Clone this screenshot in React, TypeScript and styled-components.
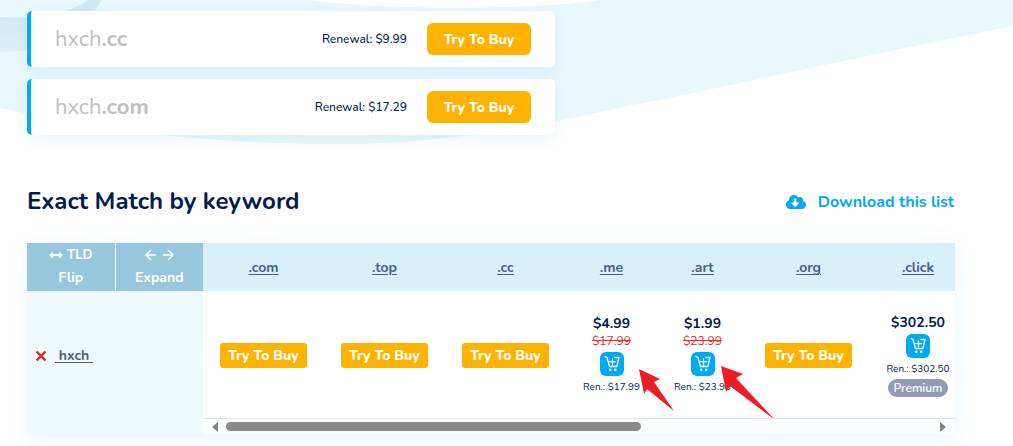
import React from "react";
import styled, { createGlobalStyle } from "styled-components";

const GlobalStyle = createGlobalStyle`
  *, *::before, *::after { box-sizing: border-box; }
  body { margin: 0; background: #fff; color: #001b4f; font-family: Nunito, Lato, sans-serif; overflow-x: hidden; }
  button { font-family: inherit; border: 0; cursor: pointer; }
`;

const Page = styled.div`
  position: relative;
  padding: 11px 58px 12px 27px;
`;

const Backdrop = styled.svg`
  position: absolute;
  top: 0;
  left: 0;
  width: 100%;
  height: 146px;
  z-index: -1;
`;

const Results = styled.ul`
  display: flex;
  flex-direction: column;
  gap: 12px;
  max-width: 528px;
  margin: 0;
  padding: 0;
  list-style: none;
`;

const ResultCard = styled.li`
  display: flex;
  align-items: center;
  height: 56px;
  padding: 0 24px;
  border-left: 4px solid #00aaf7;
  border-radius: 5px;
  background: #fff;
  box-shadow: 0 4px 14px rgba(0, 150, 220, 0.1);
`;

const DomainName = styled.div`
  flex: 1;
  font-size: 22px;
  line-height: 28px;
  color: #bfbfbf;
`;

const Renewal = styled.span`
  margin-right: 20px;
  font-size: 12px;
  font-weight: 500;
`;

const BuyButton = styled.button<{ $large?: boolean }>`
  display: block;
  width: ${(p) => (p.$large ? 104 : 87)}px;
  height: ${(p) => (p.$large ? 32 : 25)}px;
  margin: 0 auto;
  padding: 0;
  border-radius: ${(p) => (p.$large ? 6 : 3)}px;
  background: #ffb300;
  color: #fff;
  font-size: 14px;
  font-weight: 800;
  white-space: nowrap;
`;

const SectionHead = styled.header`
  display: flex;
  align-items: center;
  justify-content: space-between;
  margin: 48px 0 24px;
`;

const Title = styled.h2`
  margin: 0;
  font-size: 24px;
  line-height: 36px;
  font-weight: 700;
`;

const DownloadLink = styled.a`
  display: flex;
  align-items: center;
  gap: 12px;
  padding: 1px 1px 0 0;
  color: #00a9f4;
  font-size: 16px;
  font-weight: 700;
  text-decoration: none;
`;

const Matrix = styled.section`
  display: flex;
  box-shadow: 0 4px 20px rgba(0, 150, 220, 0.1);
`;

const Frozen = styled.div`
  display: flex;
  flex-direction: column;
  flex: 0 0 176px;
  background: #eff9fe;
`;

const FrozenHead = styled.div`
  display: grid;
  grid-template-columns: 1fr 1fr;
  gap: 1px;
  height: 48px;
  background: #fff;
`;

const HeadButton = styled.button`
  display: flex;
  flex-direction: column;
  align-items: center;
  padding: 1px 0 0;
  background: #97c7dc;
  color: #fff;
  font-size: 14px;
  line-height: 24px;
  font-weight: 700;
`;

const HeadTop = styled.span`
  display: flex;
  align-items: center;
  justify-content: center;
  gap: 4px;
  height: 22px;
  font-size: 13px;
`;

const Keyword = styled.div`
  display: flex;
  align-items: center;
  height: 129px;
  padding-left: 8px;
  gap: 8px;
`;

const RemoveButton = styled.button`
  display: flex;
  padding: 0;
  background: none;
`;

const TextLink = styled.a`
  color: #4b5f80;
  font-size: 14px;
  font-weight: 700;
  text-underline-offset: 2px;
  white-space: pre;
`;

const ScrollPane = styled.div`
  flex: 1;
  min-width: 0;
  background: #fff;
`;

const Viewport = styled.div`
  overflow: hidden;
`;

const TldTable = styled.table`
  width: 764px;
  min-width: calc(100% + 12px);
  table-layout: fixed;
  border-collapse: collapse;
`;

const TldHead = styled.th<{ $width: number }>`
  width: ${(p) => p.$width}px;
  height: 48px;
  padding: 0;
  background: #d7f0fa;
`;

const TldCell = styled.td`
  position: relative;
  height: 127px;
  padding: 1px 0 0;
  text-align: center;
  vertical-align: middle;
`;

const Offer = styled.div`
  display: flex;
  flex-direction: column;
  align-items: center;
`;

const Price = styled.strong`
  font-size: 14px;
  line-height: 18px;
`;

const OldPrice = styled.s`
  font-size: 12px;
  line-height: 17px;
  color: #e5302f;
`;

const CartButton = styled.button`
  display: flex;
  width: 24px;
  height: 24px;
  margin: 2px 0 3px;
  padding: 0;
  border-radius: 6px;
  background: #00a9f4;
`;

const RenewalNote = styled.small`
  font-size: 10px;
  line-height: 16px;
  white-space: nowrap;
`;

const PremiumBadge = styled.span`
  margin-top: 2px;
  padding: 0 6px;
  border-radius: 9px;
  background: #929db1;
  color: #fff;
  font-size: 12px;
  line-height: 18px;
  font-weight: 600;
`;

const ScrollBar = styled.div`
  display: flex;
  align-items: center;
  height: 16px;
  padding: 0 9px;
  border-top: 1px solid #e4e4e4;
  background: #fbfcfd;
`;

const ScrollArrow = styled.button`
  display: flex;
  flex: none;
  padding: 0;
  background: none;
`;

const ScrollTrack = styled.div`
  flex: 1;
  margin: 0 11px 0 8px;
`;

const ScrollThumb = styled.div`
  width: 59%;
  height: 9px;
  border-radius: 5px;
  background: #8b8b8b;
`;

const Pointer = styled.svg`
  position: absolute;
  top: 58px;
  left: 66px;
  z-index: 1;
  pointer-events: none;
`;

type Tld = { name: string; width: number; price?: string; old?: string; ren?: string; premium?: boolean; arrow?: string };

const tlds: Tld[] = [
  { name: ".com", width: 121 },
  { name: ".top", width: 121 },
  { name: ".cc", width: 121 },
  { name: ".me", width: 91, price: "$4.99", old: "$17.99", ren: "$17.99", arrow: "M7 20 L28 30 L22 33 L42 62 L15 40 L12 45 Z" },
  { name: ".art", width: 91, price: "$1.99", old: "$23.99", ren: "$23.99", arrow: "M-2 17 L20 25 L13 29 L52 71 L7 37 L3 43 Z" },
  { name: ".org", width: 121 },
  { name: ".click", width: 98, price: "$302.50", ren: "$302.50", premium: true },
];

const CartIcon = () => (
  <svg width="24" height="24" viewBox="0 0 24 24" fill="none" stroke="#fff" strokeWidth="1.3" strokeLinecap="round" strokeLinejoin="round">
    <path d="M5 4.500L7 5.500L9.500 14.500H16.800L19 5.500H14.800M12.500 6.700v6M9.500 9.700h6" />
    <circle cx="10.200" cy="17.800" r="1.300" fill="#fff" stroke="none" />
    <circle cx="15.200" cy="17.800" r="1.300" fill="#fff" stroke="none" />
  </svg>
);

export default function App() {
  return (
    <>
      <GlobalStyle />
      <Page>
        <Backdrop viewBox="0 0 1013 146" preserveAspectRatio="none" aria-hidden="true">
          <defs>
            <linearGradient id="ribbon" x1="0" y1="0" x2="0" y2="1">
              <stop offset="0" stopColor="#cfe7f4" />
              <stop offset="1" stopColor="#dceef8" />
            </linearGradient>
          </defs>
          <path d="M0 0H1013V26C930 42 720 88 620 108C520 130 420 146 320 144C190 142 100 130 0 108Z" fill="#e9f8fe" />
          <path d="M0 17C35 19 70 14 88 0H102C82 35 45 52 0 52Z" fill="url(#ribbon)" />
          <path d="M310 0C370 9 520 12 600 0Z" fill="#fff" />
        </Backdrop>

        <Results>
          {[["cc", "$9.99"], ["com", "$17.29"]].map(([tld, price]) => (
            <ResultCard key={tld}>
              <DomainName>hxch<b>.{tld}</b></DomainName>
              <Renewal>Renewal: {price}</Renewal>
              <BuyButton $large>Try To Buy</BuyButton>
            </ResultCard>
          ))}
        </Results>

        <SectionHead>
          <Title>Exact Match by keyword</Title>
          <DownloadLink href="#download">
            <svg width="20" height="14" viewBox="0 0 640 448" fill="currentColor" aria-hidden="true">
              <path fillRule="evenodd" d="M537.6 194.600c4.100-10.700 6.400-22.400 6.400-34.600 0-53-43-96-96-96-19.700 0-38.100 6-53.300 16.200C367 32.200 315.300 0 256 0c-88.400 0-160 71.600-160 160 0 2.700.1 5.400.2 8.100C40.200 187.800 0 241.200 0 304c0 79.500 64.500 144 144 144h368c70.700 0 128-57.300 128-128 0-61.900-44-113.600-102.400-125.400zM409.400 268.700 303.300 374.600c-6.200 6.200-16.400 6.200-22.600 0L174.700 268.700c-10.100-10.100-2.900-27.300 11.300-27.300h66v-112c0-8.800 7.200-16 16-16h48c8.800 0 16 7.200 16 16v112h66c14.200 0 21.400 17.200 11.400 27.300z" />
            </svg>
            Download this list
          </DownloadLink>
        </SectionHead>

        <Matrix>
          <Frozen>
            <FrozenHead>
              <HeadButton>
                <HeadTop>
                  <svg width="14" height="8" viewBox="0 0 14 8" fill="#fff" aria-hidden="true"><path d="M0 4 4 .5V3h6V.5L14 4l-4 3.500V5H4v2.500z" /></svg>
                  TLD
                </HeadTop>
                Flip
              </HeadButton>
              <HeadButton>
                <HeadTop>
                  <svg width="29" height="12" viewBox="0 0 29 12" fill="none" stroke="#fff" strokeWidth="1.600" strokeLinecap="round" strokeLinejoin="round" aria-hidden="true">
                    <path d="M10.500 6H1M5.500 1.500 1 6l4.500 4.500M18.500 6H28M23.500 1.500 28 6l-4.500 4.500" />
                  </svg>
                </HeadTop>
                Expand
              </HeadButton>
            </FrozenHead>
            <Keyword>
              <RemoveButton aria-label="Remove hxch">
                <svg width="12" height="12" viewBox="0 0 12 12" stroke="#e5281f" strokeWidth="2.400"><path d="M1.500 1.500l9 9M10.500 1.500l-9 9" /></svg>
              </RemoveButton>
              <TextLink href="#hxch"> hxch </TextLink>
            </Keyword>
          </Frozen>

          <ScrollPane>
            <Viewport>
              <TldTable>
                <thead>
                  <tr>
                    {tlds.map((t) => (
                      <TldHead key={t.name} $width={t.width} scope="col">
                        <TextLink href={`#${t.name}`}>{t.name}</TextLink>
                      </TldHead>
                    ))}
                  </tr>
                </thead>
                <tbody>
                  <tr>
                    {tlds.map((t) => (
                      <TldCell key={t.name}>
                        {t.price ? (
                          <Offer>
                            <Price>{t.price}</Price>
                            {t.old && <OldPrice>{t.old}</OldPrice>}
                            <CartButton aria-label={`Add hxch${t.name} to cart`}><CartIcon /></CartButton>
                            <RenewalNote>Ren.: {t.ren}</RenewalNote>
                            {t.premium && <PremiumBadge>Premium</PremiumBadge>}
                          </Offer>
                        ) : (
                          <BuyButton>Try To Buy</BuyButton>
                        )}
                        {t.arrow && (
                          <Pointer width="60" height="72" viewBox="0 0 60 72" overflow="visible" aria-hidden="true">
                            <path d={t.arrow} fill="#ee1c25" />
                          </Pointer>
                        )}
                      </TldCell>
                    ))}
                  </tr>
                </tbody>
              </TldTable>
            </Viewport>
            <ScrollBar>
              <ScrollArrow aria-label="Scroll left">
                <svg width="6" height="10" viewBox="0 0 6 10" fill="#808080"><path d="M6 0v10L0 5z" /></svg>
              </ScrollArrow>
              <ScrollTrack><ScrollThumb /></ScrollTrack>
              <ScrollArrow aria-label="Scroll right">
                <svg width="6" height="10" viewBox="0 0 6 10" fill="#808080"><path d="M0 0v10l6-5z" /></svg>
              </ScrollArrow>
            </ScrollBar>
          </ScrollPane>
        </Matrix>
      </Page>
    </>
  );
}
